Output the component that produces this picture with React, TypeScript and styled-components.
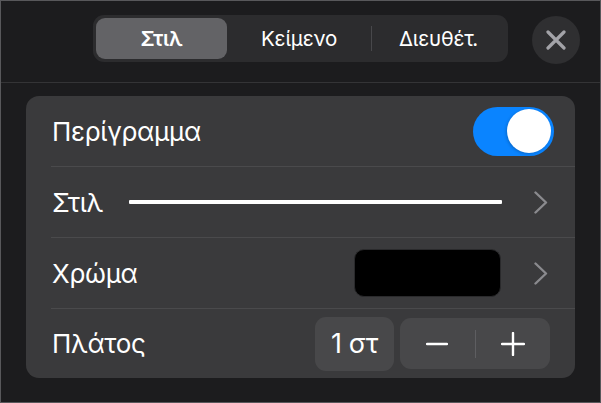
import React from "react";
import styled, { createGlobalStyle } from "styled-components";

const Global = createGlobalStyle`
  html, body { margin: 0; padding: 0; background: #1c1c1e; }
  * { box-sizing: border-box; }
`;

const Frame = styled.div`
  width: 601px;
  height: 403px;
  border: 1px solid #58585b;
  background: #1c1c1e;
  font-family: Inter, "Noto Sans", "DejaVu Sans", sans-serif;
  color: #fff;
  display: flex;
  flex-direction: column;
`;

const Header = styled.div`
  height: 82px;
  flex: none;
  display: flex;
  align-items: flex-start;
  padding: 14px 20px 0 92px;
  gap: 24px;
  border-bottom: 1px solid #343436;
`;

const Segmented = styled.div`
  width: 415px;
  height: 47px;
  border-radius: 11px;
  background: #2c2c2e;
  padding: 3px;
  display: grid;
  grid-template-columns: 131px 144px 1px 133px;
  align-items: center;
`;

const Segment = styled.div<{ $active?: boolean }>`
  height: 41px;
  border-radius: 9px;
  display: flex;
  align-items: center;
  justify-content: center;
  font-size: 20.5px;
  letter-spacing: -0.2px;
  font-weight: ${(p) => (p.$active ? 600 : 400)};
  background: ${(p) => (p.$active ? "#636366" : "transparent")};
`;

const SegDivider = styled.div`
  height: 25px;
  background: #48484b;
`;

const CloseButton = styled.div`
  width: 48px;
  height: 48px;
  border-radius: 50%;
  background: #2f2f31;
  display: flex;
  align-items: center;
  justify-content: center;
  margin-top: 1px;
`;

const Card = styled.div`
  margin: 13px 0 0 25px;
  width: 549px;
  height: 282px;
  border-radius: 13px;
  background: #3a3a3c;
  display: flex;
  flex-direction: column;
  overflow: hidden;
`;

const Row = styled.div<{ $last?: boolean; $pr?: number }>`
  height: ${(p) => (p.$last ? "69px" : "71px")};
  margin-left: 25px;
  padding: 0 ${(p) => p.$pr ?? 27}px 0 1px;
  display: flex;
  align-items: center;
  border-bottom: ${(p) => (p.$last ? "none" : "1px solid #4a4a4c")};
`;

const Label = styled.div`
  font-size: 26px;
  letter-spacing: -0.3px;
  color: #fff;
  flex: none;
`;

const Spacer = styled.div`
  flex: 1;
`;

const Toggle = styled.div`
  width: 81px;
  height: 49px;
  border-radius: 25px;
  background: #0a84ff;
  display: flex;
  align-items: center;
  justify-content: flex-end;
  padding-right: 3px;
`;

const Knob = styled.div`
  width: 44px;
  height: 44px;
  border-radius: 50%;
  background: #fff;
  box-shadow: -1px 1px 3px rgba(0, 0, 0, 0.2);
`;

const LineSample = styled.div`
  margin-left: 26px;
  width: 373px;
  height: 4px;
  background: #fff;
  border-radius: 1px;
`;

const ChevronWrap = styled.div<{ $ml: number }>`
  margin-left: ${(p) => p.$ml}px;
  display: flex;
  align-items: center;
`;

const Swatch = styled.div`
  width: 147px;
  height: 48px;
  border-radius: 10px;
  background: #000;
  border: 1px solid #2a2a2c;
`;

const ValueBox = styled.div`
  width: 79px;
  height: 54px;
  border-radius: 11px;
  background: #48484a;
  display: flex;
  align-items: center;
  justify-content: center;
  font-size: 27px;
  letter-spacing: -0.3px;
  color: #fff;
`;

const Stepper = styled.div`
  margin-left: 6px;
  width: 150px;
  height: 51px;
  border-radius: 11px;
  background: #48484a;
  display: grid;
  grid-template-columns: 1fr 1px 1fr;
  align-items: center;
`;

const StepDivider = styled.div`
  height: 28px;
  background: #5e5e61;
`;

const StepButton = styled.div`
  display: flex;
  align-items: center;
  justify-content: center;
`;

const Chevron = () => (
  <svg width="14" height="23" viewBox="0 0 14 23" fill="none">
    <path d="M1.5 1.5 L12 11.5 L1.5 21.5" stroke="#8a8a8e" strokeWidth="2.4" strokeLinecap="round" strokeLinejoin="round" />
  </svg>
);

export default function App() {
  return (
    <>
      <Global />
      <Frame>
        <Header>
          <Segmented>
            <Segment $active>Στιλ</Segment>
            <Segment>Κείμενο</Segment>
            <SegDivider />
            <Segment>Διευθέτ.</Segment>
          </Segmented>
          <CloseButton>
            <svg width="20" height="20" viewBox="0 0 20 20">
              <path d="M2 2 L18 18 M18 2 L2 18" stroke="#a3a3a8" strokeWidth="3.2" strokeLinecap="round" />
            </svg>
          </CloseButton>
        </Header>
        <Card>
          <Row $pr={21}>
            <Label>Περίγραμμα</Label>
            <Spacer />
            <Toggle>
              <Knob />
            </Toggle>
          </Row>
          <Row>
            <Label>Στιλ</Label>
            <LineSample />
            <Spacer />
            <ChevronWrap $ml={0}>
              <Chevron />
            </ChevronWrap>
          </Row>
          <Row>
            <Label>Χρώμα</Label>
            <Spacer />
            <Swatch />
            <ChevronWrap $ml={33}>
              <Chevron />
            </ChevronWrap>
          </Row>
          <Row $last $pr={25}>
            <Label>Πλάτος</Label>
            <Spacer />
            <ValueBox>1 στ</ValueBox>
            <Stepper>
              <StepButton>
                <svg width="22" height="4" viewBox="0 0 22 4">
                  <path d="M1 2 H21" stroke="#fff" strokeWidth="2.4" strokeLinecap="round" />
                </svg>
              </StepButton>
              <StepDivider />
              <StepButton>
                <svg width="24" height="24" viewBox="0 0 24 24">
                  <path d="M12 1 V23 M1 12 H23" stroke="#fff" strokeWidth="2.4" strokeLinecap="round" />
                </svg>
              </StepButton>
            </Stepper>
          </Row>
        </Card>
      </Frame>
    </>
  );
}
